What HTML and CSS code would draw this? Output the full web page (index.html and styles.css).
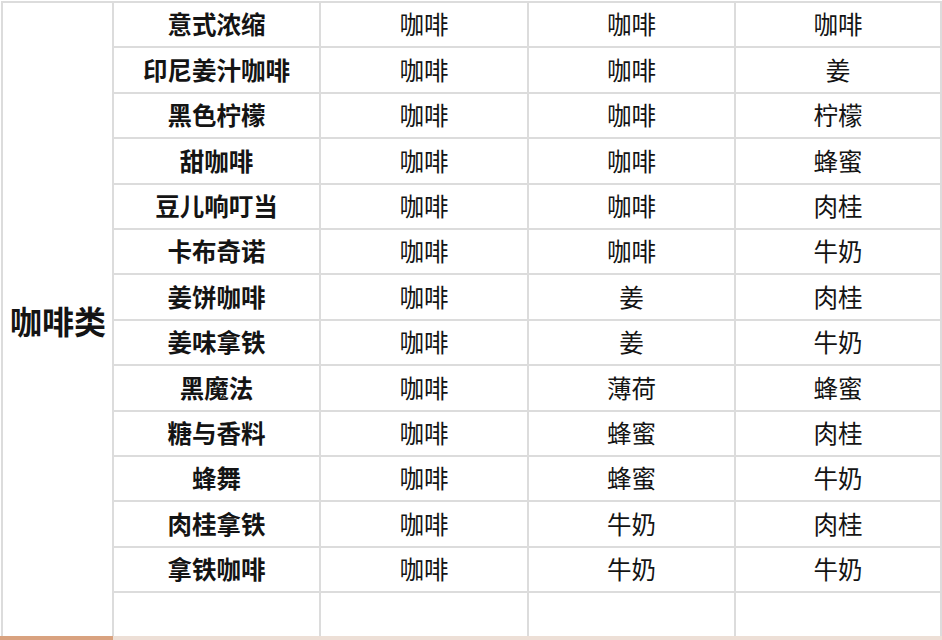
FILE: index.html
```html
<!DOCTYPE html>
<html lang="zh">
<head>
<meta charset="utf-8">
<link rel="stylesheet" href="styles.css">
</head>
<body>
<div class="sheet">
  <div class="grid">
    <div class="cell cat">咖啡类</div>
    <div class="cell name">意式浓缩</div><div class="cell">咖啡</div><div class="cell">咖啡</div><div class="cell">咖啡</div>
    <div class="cell name">印尼姜汁咖啡</div><div class="cell">咖啡</div><div class="cell">咖啡</div><div class="cell">姜</div>
    <div class="cell name">黑色柠檬</div><div class="cell">咖啡</div><div class="cell">咖啡</div><div class="cell">柠檬</div>
    <div class="cell name">甜咖啡</div><div class="cell">咖啡</div><div class="cell">咖啡</div><div class="cell">蜂蜜</div>
    <div class="cell name">豆儿响叮当</div><div class="cell">咖啡</div><div class="cell">咖啡</div><div class="cell">肉桂</div>
    <div class="cell name">卡布奇诺</div><div class="cell">咖啡</div><div class="cell">咖啡</div><div class="cell">牛奶</div>
    <div class="cell name">姜饼咖啡</div><div class="cell">咖啡</div><div class="cell">姜</div><div class="cell">肉桂</div>
    <div class="cell name">姜味拿铁</div><div class="cell">咖啡</div><div class="cell">姜</div><div class="cell">牛奶</div>
    <div class="cell name">黑魔法</div><div class="cell">咖啡</div><div class="cell">薄荷</div><div class="cell">蜂蜜</div>
    <div class="cell name">糖与香料</div><div class="cell">咖啡</div><div class="cell">蜂蜜</div><div class="cell">肉桂</div>
    <div class="cell name">蜂舞</div><div class="cell">咖啡</div><div class="cell">蜂蜜</div><div class="cell">牛奶</div>
    <div class="cell name">肉桂拿铁</div><div class="cell">咖啡</div><div class="cell">牛奶</div><div class="cell">肉桂</div>
    <div class="cell name">拿铁咖啡</div><div class="cell">咖啡</div><div class="cell">牛奶</div><div class="cell">牛奶</div>
    <div class="cell name"></div><div class="cell"></div><div class="cell"></div><div class="cell"></div>
  </div>
  <div class="strip"><div class="strip-a"></div><div class="strip-b"></div></div>
</div>
</body>
</html>
```
FILE: styles.css
```css
html, body {
  margin: 0;
  padding: 0;
  background: #ffffff;
}
body {
  font-family: "Noto Sans CJK SC", "Noto Sans", sans-serif;
  color: #141414;
}
.sheet {
  width: 942px;
  height: 640px;
  overflow: hidden;
  padding-top: 1px;
  box-sizing: border-box;
}
.grid {
  margin-left: 1px;
  display: grid;
  grid-template-columns: 109px 205px 206px 205px 204px;
  grid-auto-rows: 43.4px;
  gap: 2px;
  padding: 2px 2px 0 2px;
  background: #dcdcdc;
}
.cell {
  background: #ffffff;
  display: flex;
  align-items: center;
  justify-content: center;
  font-size: 24.5px;
  line-height: 1;
  white-space: nowrap;
}
.name {
  font-weight: 700;
}
.cat {
  grid-row: 1 / span 14;
  font-weight: 700;
  font-size: 32px;
  justify-content: flex-start;
  padding-left: 7px;
}
.strip {
  display: flex;
  height: 4px;
}
.strip-a {
  width: 113px;
  background: #d9a27f;
}
.strip-b {
  flex: 1;
  background: #eddfd6;
}
```
